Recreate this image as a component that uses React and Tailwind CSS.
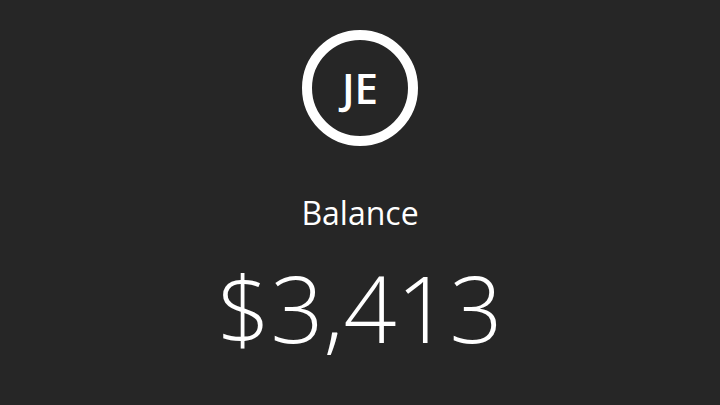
export default function App() {
  return (
    <div className="flex h-[405px] w-[720px] flex-col items-center bg-[#262626] font-['Open_Sans',sans-serif] text-white">
      <div className="mt-[30px] flex h-[116px] w-[116px] items-center justify-center rounded-full border-[10px] border-white">
        <span className="text-[42px] font-semibold leading-none">JE</span>
      </div>
      <div className="mt-[51px] text-[32px] font-normal leading-none">Balance</div>
      <div className="mt-[32px] text-[93px] font-light leading-none">$3,413</div>
    </div>
  );
}
